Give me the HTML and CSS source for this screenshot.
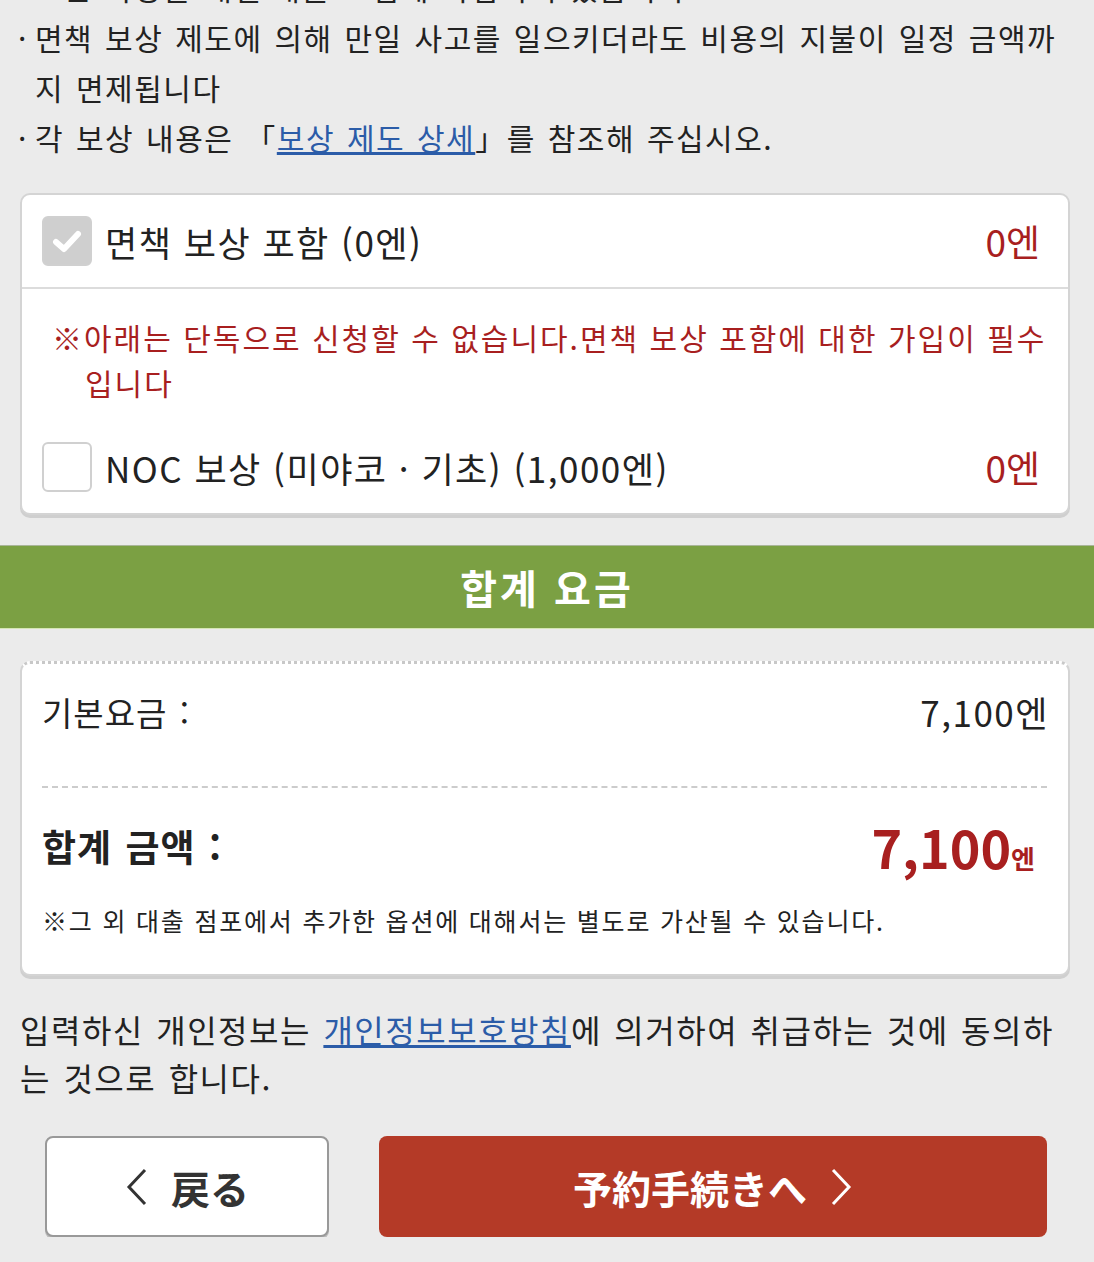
FILE: index.html
```html
<!DOCTYPE html>
<html lang="ko">
<head>
    <meta charset="UTF-8">
    <meta name="viewport" content="width=device-width, initial-scale=1.0">
    <title>합계 요금</title>
    <link rel="stylesheet" href="styles.css">
</head>
<body>

<div class="section">
    <!-- 안내 문구 -->
    <ul class="notes">
        <li><span class="dot">·</span><span>모든 차량은 대인·대물 보험에 가입되어 있습니다.</span></li>
        <li><span class="dot">·</span><span>면책 보상 제도에 의해 만일 사고를 일으키더라도 비용의 지불이 일정 금액까지 면제됩니다</span></li>
        <li><span class="dot">·</span><span>각 보상 내용은 「<a href="#">보상 제도 상세</a>」를 참조해 주십시오.</span></li>
    </ul>

    <!-- 보상 옵션 -->
    <div class="card options">
        <div class="option">
            <span class="check checked">
                <svg width="30" height="24" viewBox="0 0 30 24"><polyline points="4,13 12,20 26,5" fill="none" stroke="#fff" stroke-width="6" stroke-linecap="round" stroke-linejoin="round"/></svg>
            </span>
            <span class="option-name">면책 보상 포함 (0엔)</span>
            <span class="option-price">0엔</span>
        </div>
        <div class="option-body">
            <p class="notice">※아래는 단독으로 신청할 수 없습니다.면책 보상 포함에 대한 가입이 필수입니다</p>
            <div class="option">
                <span class="check"></span>
                <span class="option-name">NOC 보상 (미야코 · 기초) (1,000엔)</span>
                <span class="option-price">0엔</span>
            </div>
        </div>
    </div>
</div>

<h2 class="total-title">합계 요금</h2>

<div class="section">
    <div class="card summary">
        <div class="sum-row base">
            <span>기본요금 :</span>
            <span class="base-price">7,100엔</span>
        </div>
        <div class="sum-row total">
            <span>합계 금액 :</span>
            <span class="total-price">7,100<small>엔</small></span>
        </div>
        <p class="sum-note">※그 외 대출 점포에서 추가한 옵션에 대해서는 별도로 가산될 수 있습니다.</p>
    </div>

    <p class="privacy">입력하신 개인정보는 <a href="#">개인정보보호방침</a>에 의거하여 취급하는 것에 동의하는 것으로 합니다.</p>

    <div class="buttons">
        <button class="btn-back">
            <svg width="24" height="40" viewBox="0 0 24 40"><polyline points="20,3 4,20 20,37" fill="none" stroke="#333" stroke-width="3"/></svg>
            <span>戻る</span>
        </button>
        <button class="btn-next">
            <span>予約手続きへ</span>
            <svg width="24" height="40" viewBox="0 0 24 40"><polyline points="4,3 20,20 4,37" fill="none" stroke="#fff" stroke-width="3"/></svg>
        </button>
    </div>
</div>

</body>
</html>
```

FILE: styles.css
```css
body {
    font-family: "Noto Sans CJK KR", "Noto Sans", sans-serif;
    margin: 0;
    padding: 0;
    background: #ebebeb;
    color: #222;
    overflow: hidden;
}
a {
    color: #2b5ca8;
    text-decoration: underline;
}
.section {
    padding: 0 24px 0 20px;
}
.notes {
    list-style: none;
    margin: -38px 0 0 0;
    padding: 0;
    font-size: 30px;
    line-height: 50px;
    letter-spacing: 1.5px;
    word-spacing: 2px;
}
.notes li {
    display: flex;
    margin-left: -2px;
}
.dot {
    width: 17px;
    flex: none;
}
.card {
    background: #fff;
    border: 2px solid #d4d4d4;
    border-radius: 10px;
    box-shadow: 0 3px 0 #cfcfcf;
}
.options {
    margin-top: 31px;
}
.option {
    display: flex;
    align-items: center;
    height: 92px;
    padding: 0 28px 0 20px;
    font-size: 35px;
    letter-spacing: 1.5px;
}
.check {
    width: 46px;
    height: 46px;
    border: 2px solid #d0d0d0;
    border-radius: 6px;
    background: #fff;
    display: flex;
    align-items: center;
    justify-content: center;
    flex: none;
}
.check.checked {
    background: #cfcfcf;
}
.option-name {
    margin-left: 13px;
}
.option-price {
    margin-left: auto;
    color: #a81f1f;
    font-size: 37px;
    letter-spacing: 0;
}
.option-body {
    border-top: 2px solid #dcdcdc;
}
.notice {
    margin: 26px 12px 16px 30px;
    padding-left: 33px;
    text-indent: -33px;
    color: #a81f1f;
    font-size: 30px;
    line-height: 45px;
    letter-spacing: 2px;
}
.total-title {
    margin: 30px 0 0 0;
    height: 82px;
    line-height: 82px;
    background: #7ba043;
    border-top: 1px solid #a9b598;
    border-bottom: 1px solid #d4e6b4;
    color: #fff;
    text-align: center;
    font-size: 40px;
    font-weight: 700;
    letter-spacing: 3px;
}
.summary {
    margin-top: 32px;
    padding: 0 21px 0 20px;
    border-top: 3px dotted #c8c8c8;
}
.sum-row {
    display: flex;
    justify-content: space-between;
    align-items: center;
}
.base {
    font-size: 33px;
    padding: 28px 0 54px;
    line-height: 40px;
    letter-spacing: 1px;
    word-spacing: 2px;
    border-bottom: 2px dashed #cccccc;
}
.base-price {
    font-size: 35px;
    letter-spacing: 1.5px;
    margin-right: -2px;
}
.total {
    font-size: 37px;
    font-weight: 700;
    padding: 32px 0 0;
    height: 52px;
    letter-spacing: 1px;
    word-spacing: 2px;
}
.total-price {
    color: #a81f1f;
    font-size: 52px;
    letter-spacing: 0;
    margin-right: 12px;
}
.total-price small {
    font-size: 26px;
}
.sum-note {
    margin: 30px 0 36px;
    font-size: 25px;
    line-height: 36px;
    letter-spacing: 1.8px;
}
.privacy {
    margin: 29px 0 0;
    font-size: 32px;
    line-height: 48px;
    letter-spacing: 1.5px;
    word-spacing: 2px;
}
.buttons {
    display: flex;
    gap: 50px;
    margin-top: 35px;
    padding: 0 23px 0 25px;
}
.buttons button {
    height: 101px;
    border-radius: 8px;
    display: flex;
    align-items: center;
    justify-content: center;
    gap: 22px;
    font-family: inherit;
    font-size: 39px;
    font-weight: 700;
    cursor: pointer;
}
.btn-back {
    width: 284px;
    background: #fff;
    border: 2px solid #999;
    color: #333;
    box-shadow: 0 2px 0 #bbb;
}
.btn-next {
    flex: 1;
    background: #b43a27;
    border: none;
    color: #fff;
}
```
